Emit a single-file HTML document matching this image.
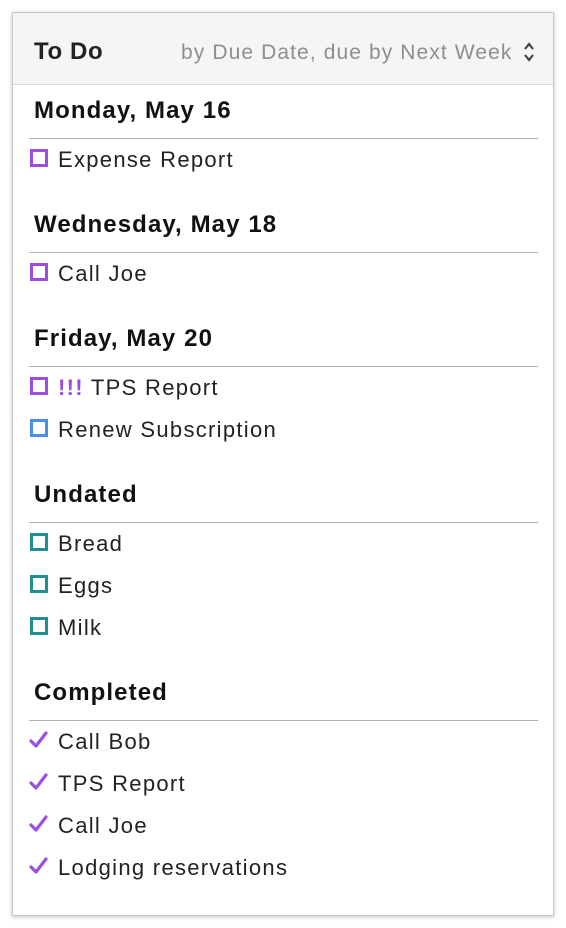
<!DOCTYPE html>
<html><head><style>
body{margin:0;width:566px;height:928px;background:#fff;font-family:"Liberation Sans",sans-serif;position:relative;overflow:hidden}
.panel{position:absolute;left:12px;top:12px;width:540px;height:902px;border:1px solid #c8c8c8;box-shadow:0 1px 4px rgba(0,0,0,.25);background:#fff}
.hdr{position:absolute;left:0;top:0;width:540px;height:71px;background:#f5f5f5;border-bottom:1px solid #d6d6d6}
.t{position:absolute;white-space:nowrap;line-height:1}
.h{font-size:24px;font-weight:bold;color:#111;left:21px;letter-spacing:1.1px}
.i{font-size:22px;color:#222;left:45px;letter-spacing:1.3px}
.ln{position:absolute;left:16px;width:509px;height:1px;background:#b0b0b0}
.cb{position:absolute;left:17px;width:12px;height:12px;border:3px solid #9b4ee0}
.ck{position:absolute;left:16px}
</style></head><body>
<div class="panel">
<div class="hdr">
<div class="t" style="left:21px;top:27px;font-size:24px;font-weight:bold;color:#222;letter-spacing:0.6px">To Do</div>
<div class="t" style="left:168px;top:29px;font-size:21px;color:#8e8e8e;letter-spacing:1.1px">by Due Date, due by Next Week</div>
<svg style="position:absolute;left:509px;top:28px" width="14" height="22" viewBox="0 0 14 22"><path d="M3 8 L7 3 L11 8 M3 14 L7 19 L11 14" fill="none" stroke="#444" stroke-width="2.2"/></svg>
</div>
<div class="t h" style="top:86px">Monday, May 16</div>
<div class="ln" style="top:125px"></div>
<div class="cb" style="top:136px"></div><div class="t i" style="top:136px">Expense Report</div>

<div class="t h" style="top:200px">Wednesday, May 18</div>
<div class="ln" style="top:239px"></div>
<div class="cb" style="top:250px"></div><div class="t i" style="top:250px">Call Joe</div>

<div class="t h" style="top:314px">Friday, May 20</div>
<div class="ln" style="top:353px"></div>
<div class="cb" style="top:364px"></div><div class="t i" style="top:364px"><span style="color:#9b4ee0;font-weight:bold">!!!</span> TPS Report</div>
<div class="cb" style="top:406px;border-color:#4a90e2"></div><div class="t i" style="top:406px">Renew Subscription</div>

<div class="t h" style="top:470px">Undated</div>
<div class="ln" style="top:509px"></div>
<div class="cb" style="top:520px;border-color:#1f8f8f"></div><div class="t i" style="top:520px">Bread</div>
<div class="cb" style="top:562px;border-color:#1f8f8f"></div><div class="t i" style="top:562px">Eggs</div>
<div class="cb" style="top:604px;border-color:#1f8f8f"></div><div class="t i" style="top:604px">Milk</div>

<div class="t h" style="top:668px">Completed</div>
<div class="ln" style="top:707px"></div>
<svg class="ck" style="top:717px" width="20" height="20" viewBox="0 0 20 20"><path d="M2 11 L7 16 L17 3" fill="none" stroke="#9b4ee0" stroke-width="3.2" stroke-linecap="round" stroke-linejoin="round"/></svg><div class="t i" style="top:718px">Call Bob</div>
<svg class="ck" style="top:759px" width="20" height="20" viewBox="0 0 20 20"><path d="M2 11 L7 16 L17 3" fill="none" stroke="#9b4ee0" stroke-width="3.2" stroke-linecap="round" stroke-linejoin="round"/></svg><div class="t i" style="top:760px">TPS Report</div>
<svg class="ck" style="top:801px" width="20" height="20" viewBox="0 0 20 20"><path d="M2 11 L7 16 L17 3" fill="none" stroke="#9b4ee0" stroke-width="3.2" stroke-linecap="round" stroke-linejoin="round"/></svg><div class="t i" style="top:802px">Call Joe</div>
<svg class="ck" style="top:843px" width="20" height="20" viewBox="0 0 20 20"><path d="M2 11 L7 16 L17 3" fill="none" stroke="#9b4ee0" stroke-width="3.2" stroke-linecap="round" stroke-linejoin="round"/></svg><div class="t i" style="top:844px">Lodging reservations</div>
</div>
</body></html>
